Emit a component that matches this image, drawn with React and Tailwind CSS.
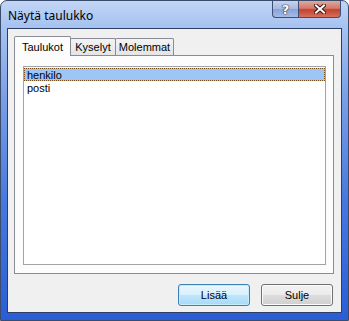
import React, { useState } from 'react';

const tabs = [
  { key: 'tables', label: 'Taulukot', w: 'w-[57px]' },
  { key: 'queries', label: 'Kyselyt', w: 'w-[46px]' },
  { key: 'both', label: 'Molemmat', w: 'w-[59px]' },
];

const items = ['henkilo', 'posti'];

const App = () => {
  const [active, setActive] = useState('tables');
  const [selected, setSelected] = useState('henkilo');

  return (
    <div className="w-[349px] h-[321px] overflow-hidden rounded-t-[7px] border border-[#3a4c6c] bg-[linear-gradient(to_bottom,#c2d6f6_0px,#a6c2f0_26px,#7ea2e7_90px,#4878de_200px,#2a5dd5_321px)] flex flex-col font-['Liberation_Sans',Arial,sans-serif] text-[11px] text-black select-none">
      <div className="h-[27px] shrink-0 flex items-start justify-between pl-[7px] pr-[7px]">
        <div className="pt-[7px] font-['Noto_Sans',sans-serif] text-[12px] leading-[16px] text-black">Näytä taulukko</div>
        <div className="flex">
          <button className="w-[26px] h-[17px] rounded-bl-[4px] border border-t-0 border-r-0 border-[#3d4f72] bg-[linear-gradient(to_bottom,#c4d3ee_0%,#a6badf_48%,#8aa3d4_52%,#a3bbe6_100%)] flex items-center justify-center">
            <span className="font-['DejaVu_Sans',sans-serif] font-bold text-[13px] leading-none text-white [text-shadow:0_0_1px_#1b2a48,0_0_1px_#1b2a48,0_0_1px_#1b2a48]">?</span>
          </button>
          <button className="w-[43px] h-[17px] rounded-br-[4px] border border-t-0 border-[#3d4f72] bg-[linear-gradient(to_bottom,#e2a89c_0%,#d27a6b_45%,#c2412f_55%,#d6705e_100%)] flex items-center justify-center">
            <svg width="12" height="10" viewBox="0 0 12 10">
              <path d="M2 1.5 L10 8.5 M10 1.5 L2 8.5" stroke="#3b1a14" strokeWidth="4" strokeLinecap="square" />
              <path d="M2 1.5 L10 8.5 M10 1.5 L2 8.5" stroke="#ffffff" strokeWidth="2" strokeLinecap="square" />
            </svg>
          </button>
        </div>
      </div>

      <div className="flex-1 mx-[6px] mb-[7px] border border-[#2c3f62] bg-[#f0f0f0] flex flex-col pt-[7px] pl-[6px] pr-[7px]">
        <div className="h-[19px] flex items-end relative z-10">
          {tabs.map((t, i) => {
            const on = active === t.key;
            return (
              <button
                key={t.key}
                onClick={() => setActive(t.key)}
                className={`${t.w} ${i > 0 ? '-ml-px' : ''} border border-b-0 border-[#898c95] rounded-t-[2px] flex justify-center ${
                  on
                    ? 'h-[20px] -mb-px bg-[#fcfcfc] relative z-10 pt-[4px]'
                    : 'h-[17px] bg-[linear-gradient(to_bottom,#f3f3f3,#e4e4e4)] pt-[2px]'
                }`}
              >
                <span className="leading-[13px]">{t.label}</span>
              </button>
            );
          })}
        </div>
        <div className="h-[219px] border border-[#898c95] bg-[#fcfcfc] pt-[10px] pl-[8px] pr-[7px] pb-[8px]">
          <div className="h-full border border-[#a0a3a8] bg-white pt-px">
            {items.map((it) => {
              const on = selected === it;
              return (
                <div
                  key={it}
                  onClick={() => setSelected(it)}
                  className={`h-[13px] pl-[2px] leading-[12px] border border-dotted ${
                    on ? 'bg-[#9dc6f7] border-[#7a4c18]' : 'border-transparent'
                  }`}
                >
                  {it}
                </div>
              );
            })}
          </div>
        </div>
        <div className="flex justify-end gap-[11px] mt-[10px] pr-px">
          <button className="w-[72px] h-[22px] rounded-[3px] border border-[#3c7fb1] bg-[linear-gradient(to_bottom,#eaf6fd_0%,#d9f0fc_50%,#bee6fd_50%,#a7d9f5_100%)] shadow-[inset_0_0_0_1px_#c7ecfc] leading-[20px]">
            Lisää
          </button>
          <button className="w-[72px] h-[22px] rounded-[3px] border border-[#707070] bg-[linear-gradient(to_bottom,#f2f2f2_0%,#ebebeb_50%,#dddddd_50%,#cfcfcf_100%)] shadow-[inset_0_0_0_1px_#fcfcfc] leading-[20px]">
            Sulje
          </button>
        </div>
      </div>
    </div>
  );
};

export default App;
